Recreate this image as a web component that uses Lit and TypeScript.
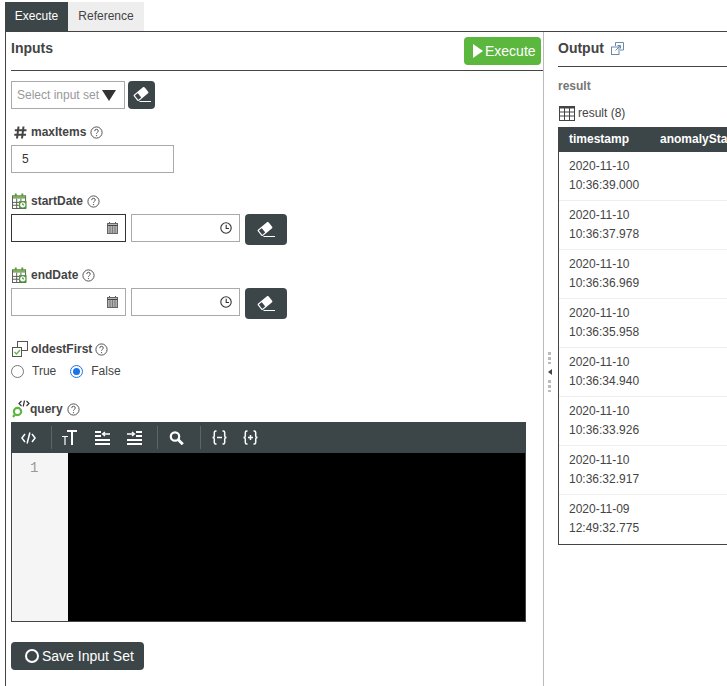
import { LitElement, html, css, svg } from "lit";
import { customElement } from "lit/decorators.js";

const eraser = svg`<svg width="18" height="16" viewBox="0 0 18 16"><g transform="rotate(-40 8 7)"><rect x="1" y="3" width="14" height="8" rx="1.500" fill="#fff"/><rect x="2.200" y="4.200" width="3.800" height="5.600" rx=".6" fill="#3c4648"/></g><path d="M6.500 14.500H18" stroke="#fff" stroke-width="1"/></svg>`;
const help = svg`<svg width="13" height="13" viewBox="0 0 13 13"><circle cx="6.500" cy="6.500" r="5.600" fill="none" stroke="#555" stroke-width="1"/><path d="M4.700 5.100a1.800 1.800 0 0 1 3.600 0c0 1.200-1.800 1.300-1.800 2.600" fill="none" stroke="#555" stroke-width="1"/><circle cx="6.500" cy="9.600" r=".7" fill="#555"/></svg>`;
const calGreen = svg`<svg width="15" height="16" viewBox="0 0 16 17"><rect x=".5" y="3" width="14" height="13.500" fill="#fff" stroke="#555"/><rect x="1" y="2.500" width="13" height="3.500" fill="#7fb05f"/><path d="M4 .5v3M11 .5v3" stroke="#5b9a3e" stroke-width="2"/><path d="M5 6v10M1 10h13M1 13h7M9.500 6v4" stroke="#555"/><rect x="7.500" y="8.500" width="8" height="8" fill="#4f9a3a"/><circle cx="11.500" cy="12.500" r="2.800" fill="#fff"/><path d="M11.500 11v1.700h1.300" stroke="#333" stroke-width=".8" fill="none"/></svg>`;
const calGrey = svg`<svg width="11" height="12" viewBox="0 0 11 12"><path d="M2.500 0v2M8.500 0v2" stroke="#555"/><rect x=".5" y="1.500" width="10" height="10" fill="#ddd" stroke="#666"/><path d="M.5 3.500h10" stroke="#444" stroke-width="1.500"/><path d="M3 4v7M5.500 4v7M8 4v7M1 6h9M1 8h9M1 10h9" stroke="#777" stroke-width=".9"/></svg>`;
const clock = svg`<svg width="12" height="12" viewBox="0 0 12 12"><circle cx="6" cy="6" r="5.200" fill="none" stroke="#333" stroke-width="1.100"/><path d="M6.200 2.800V6.500H9" stroke="#333" stroke-width="1.100" fill="none"/></svg>`;
const curlyL = "M4.500 1H3.800C2.800 1 2.300 1.500 2.300 2.500V6C2.300 7 1.500 7.500.5 7.500 1.500 7.500 2.300 8 2.300 9V12.500C2.300 13.500 2.800 14 3.800 14H4.500";
const curlyR = "M10.500 1H11.200C12.200 1 12.700 1.500 12.700 2.500V6C12.700 7 13.500 7.500 14.500 7.500 13.500 7.500 12.700 8 12.700 9V12.500C12.700 13.500 12.200 14 11.200 14H10.500";

@customElement("app-root")
export class AppRoot extends LitElement {
  static styles = css`
    :host { display: block; width: 727px; height: 686px; overflow: hidden; background: #fff; font-family: "Liberation Sans", Arial, sans-serif; font-size: 12px; color: #444; }
    svg { display: block; flex: none; }
    .tabs { display: flex; height: 29px; margin: 2px 0 0 5px; font-size: 12px; }
    .tab { display: flex; align-items: center; justify-content: center; box-sizing: border-box; height: 29px; padding-bottom: 2px; }
    .tab.on { width: 63px; background: #3c4648; color: #fff; }
    .tab.off { width: 76px; background: #eee; color: #444; }
    .main { display: flex; height: 655px; margin-left: 5px; border-top: 1px solid #444; }
    .left { box-sizing: border-box; width: 539px; height: 100%; flex: none; border-left: 1px solid #444; border-right: 1px solid #bbb; padding: 0 2px 0 5px; }
    .head { display: flex; justify-content: space-between; align-items: center; box-sizing: border-box; height: 39px; border-bottom: 1px solid #444; padding: 5px 0; margin-right: -2px; }
    h2 { margin: 0; font-size: 14px; font-weight: bold; color: #444; line-height: 16px; }
    .head h2 { margin-top: -6px; }
    .run { display: flex; align-items: center; box-sizing: border-box; width: 77px; height: 28px; margin-right: 2px; padding-left: 9px; gap: 2px; background: #5cb73f; border-radius: 4px; color: #fff; font-size: 14px; }
    .tri { width: 0; height: 0; border-left: 10px solid #fff; border-top: 7px solid transparent; border-bottom: 7px solid transparent; }
    .setrow { display: flex; gap: 3px; margin-top: 10px; }
    .select { display: flex; align-items: center; justify-content: space-between; box-sizing: border-box; width: 114px; height: 28px; border: 1px solid #aaa; padding: 0 8px 0 5px; color: #999; }
    .caret { width: 0; height: 0; border-top: 11px solid #333; border-left: 7px solid transparent; border-right: 7px solid transparent; }
    .clear { display: flex; align-items: center; justify-content: center; box-sizing: border-box; background: #3c4648; border-radius: 4px; }
    .clear.small { width: 27px; height: 28px; }
    .clear.big { width: 42px; height: 31px; }
    .label { display: flex; align-items: center; gap: 4px; height: 18px; font-weight: bold; color: #444; }
    .label.max { margin-top: 14px; padding-left: 3px; }
    .number { display: flex; align-items: center; box-sizing: border-box; width: 163px; height: 28px; margin-top: 4px; border: 1px solid #aaa; padding-left: 10px; color: #333; }
    .label.start { margin-top: 19px; padding-left: 1px; }
    .label.end { margin-top: 21px; padding-left: 1px; }
    .dates { display: flex; align-items: flex-start; gap: 5px; margin-top: 4px; }
    .input { display: flex; align-items: center; justify-content: flex-end; box-sizing: border-box; height: 28px; border: 1px solid #aaa; padding-right: 7px; }
    .input.date { width: 115px; }
    .input.time { width: 109px; }
    .input.focus { border-color: #333; }
    .label.oldest { margin-top: 21px; padding-left: 1px; gap: 3px; }
    .radios { display: flex; align-items: center; height: 14px; margin-top: 6px; color: #444; }
    .radio { box-sizing: border-box; width: 13px; height: 13px; border-radius: 50%; border: 1px solid #777; margin-right: 8px; background: #fff; }
    .radio.checked { border: 1px solid #1a73e8; padding: 2px; background: #1a73e8; background-clip: content-box; }
    .gap { width: 14px; }
    .label.query { margin-top: 22px; padding-left: 1px; gap: 0; }
    .label.query .qname { margin-right: 4px; }
    .editor { width: 515px; margin-top: 4px; box-sizing: border-box; }
    .bar { display: flex; align-items: center; height: 31px; background: #3c4648; }
    .sep { width: 1px; height: 23px; background: #59666a; }
    .sep.a { margin-left: 6px; }
    .sep.b { margin-left: 5px; }
    .tool { display: flex; justify-content: center; align-items: center; height: 31px; }
    .w27 { width: 27px; } .w31 { width: 31px; } .w33 { width: 33px; } .w34 { width: 34px; } .w35 { width: 35px; } .w36 { width: 36px; } .w37 { width: 37px; }
    .code { display: flex; height: 169px; border: 1px solid #444; border-top: 0; box-sizing: border-box; background: #000; }
    .gutter { box-sizing: border-box; width: 56px; background: #f5f5f5; color: #999; font-family: "Liberation Mono", monospace; font-size: 14px; padding: 7px 0 0 18px; }
    .save { display: flex; align-items: center; box-sizing: border-box; width: 133px; height: 28px; margin-top: 20px; padding-left: 14px; gap: 3px; background: #3c4648; border-radius: 4px; color: #fff; font-size: 14px; }
    .ring { box-sizing: border-box; width: 14px; height: 14px; border: 2.500px solid #fff; border-radius: 50%; }
    .right { position: relative; flex: 1; min-width: 0; overflow: hidden; padding-left: 14px; }
    .handle { position: absolute; left: 4px; top: 320px; display: flex; flex-direction: column; align-items: center; gap: 5px; width: 3px; }
    .dots { width: 3px; height: 12px; background-image: linear-gradient(#bbb 60%, transparent 60%); background-size: 3px 5px; }
    .arrow { width: 0; height: 0; border-right: 4px solid #444; border-top: 3px solid transparent; border-bottom: 3px solid transparent; }
    .ohead { display: flex; align-items: center; gap: 7px; box-sizing: border-box; height: 35px; border-bottom: 1px solid #444; padding-bottom: 2px; }
    .sub { margin-top: 11px; height: 16px; line-height: 16px; font-weight: bold; color: #777; }
    .cap { display: flex; align-items: center; margin-top: 10px; height: 18px; gap: 3px; padding-left: 1px; color: #444; }
    .table { width: 420px; margin-top: 5px; border-left: 1px solid #444; border-bottom: 1px solid #444; }
    .thead { display: flex; align-items: center; box-sizing: border-box; height: 25px; padding: 0 0 2px 10px; background: #3c4648; color: #fff; font-weight: bold; }
    .ts { width: 91px; }
    .row { box-sizing: border-box; height: 49px; padding: 5px 0 0 10px; border-bottom: 1px solid #eee; line-height: 19px; color: #444; }
    .row:last-child { border-bottom: 0; }
  `;

  render() {
    const rows = [
      ["2020-11-10", "10:36:39.000"], ["2020-11-10", "10:36:37.978"], ["2020-11-10", "10:36:36.969"],
      ["2020-11-10", "10:36:35.958"], ["2020-11-10", "10:36:34.940"], ["2020-11-10", "10:36:33.926"],
      ["2020-11-10", "10:36:32.917"], ["2020-11-09", "12:49:32.775"],
    ];
    return html`
      <div class="tabs"><div class="tab on">Execute</div><div class="tab off">Reference</div></div>
      <div class="main">
        <div class="left">
          <div class="head"><h2>Inputs</h2><div class="run"><span class="tri"></span>Execute</div></div>
          <div class="setrow">
            <div class="select">Select input set<span class="caret"></span></div>
            <div class="clear small">${eraser}</div>
          </div>
          <div class="label max">
            <svg width="13" height="13" viewBox="0 0 13 13"><path d="M4.500 .5 3 12.500M9.500 .5 8 12.500M.8 4.200h11.700M.3 8.800h11.700" fill="none" stroke="#444" stroke-width="2"/></svg>
            maxItems ${help}
          </div>
          <div class="number">5</div>
          <div class="label start">${calGreen}startDate ${help}</div>
          <div class="dates">
            <div class="input date focus">${calGrey}</div>
            <div class="input time">${clock}</div>
            <div class="clear big">${eraser}</div>
          </div>
          <div class="label end">${calGreen}endDate ${help}</div>
          <div class="dates">
            <div class="input date">${calGrey}</div>
            <div class="input time">${clock}</div>
            <div class="clear big">${eraser}</div>
          </div>
          <div class="label oldest">
            <svg width="16" height="16" viewBox="0 0 16 16"><rect x="5.500" y=".5" width="10" height="9" fill="#fff" stroke="#555"/><rect x=".5" y="6.500" width="9" height="9" fill="#fff" stroke="#555"/><path d="M2.500 11l2 2 3.500-4" stroke="#5cb73f" stroke-width="1.300" fill="none"/></svg>
            oldestFirst ${help}
          </div>
          <div class="radios">
            <span class="radio"></span>True<span class="gap"></span><span class="radio checked"></span>False
          </div>
          <div class="label query">
            <svg width="18" height="18" viewBox="0 0 18 18"><circle cx="5.500" cy="11.500" r="3.600" fill="none" stroke="#5cb73f" stroke-width="2.200"/><path d="M3 14.500 1 17" stroke="#5cb73f" stroke-width="2.200"/><path d="M9.500 1 7 3.500 9.500 6M12.500 .5 11.200 6.500M14.500 1 17 3.500 14.500 6" fill="none" stroke="#333" stroke-width="1.200"/></svg>
            <span class="qname">query</span>${help}
          </div>
          <div class="editor">
            <div class="bar">
              <div class="tool w34"><svg width="15" height="12" viewBox="0 0 15 12"><path d="M4 2 .9 6 4 10M11 2l3.100 4L11 10M8.900 .5 6.100 11.500" fill="none" stroke="#fff" stroke-width="1.500"/></svg></div>
              <div class="sep a"></div>
              <div class="tool w35"><svg width="15" height="15" viewBox="0 0 15 15"><path d="M5 1h10M10 1v14" fill="none" stroke="#fff" stroke-width="2"/><path d="M0 6.500h6M3 6.500V15" fill="none" stroke="#fff" stroke-width="1.200"/></svg></div>
              <div class="tool w31"><svg width="15" height="14" viewBox="0 0 15 14"><path d="M0 1h6M0 5h6M0 9h15M0 13h15" stroke="#fff" stroke-width="2"/><path d="M15 3H8M10 1 7.500 3 10 5" stroke="#fff" stroke-width="1.300" fill="none"/></svg></div>
              <div class="tool w33"><svg width="15" height="14" viewBox="0 0 15 14"><path d="M9 1h6M9 5h6M0 9h15M0 13h15" stroke="#fff" stroke-width="2"/><path d="M0 3h7M5 1l2.500 2L5 5" stroke="#fff" stroke-width="1.300" fill="none"/></svg></div>
              <div class="sep a"></div>
              <div class="tool w37"><svg width="15" height="14" viewBox="0 0 15 14"><circle cx="6" cy="5.500" r="4.200" fill="none" stroke="#fff" stroke-width="2.200"/><path d="M9 8.500l4.800 4.800" stroke="#fff" stroke-width="2.800"/></svg></div>
              <div class="sep b"></div>
              <div class="tool w36"><svg width="15" height="15" viewBox="0 0 15 15"><path d="${curlyL} ${curlyR} M5 7.500h5" fill="none" stroke="#fff" stroke-width="1.500"/></svg></div>
              <div class="tool w27"><svg width="15" height="15" viewBox="0 0 15 15"><path d="${curlyL} ${curlyR} M5 7.500h5M7.500 5v5" fill="none" stroke="#fff" stroke-width="1.500"/></svg></div>
            </div>
            <div class="code"><div class="gutter">1</div></div>
          </div>
          <div class="save"><span class="ring"></span>Save Input Set</div>
        </div>
        <div class="right">
          <div class="handle"><span class="dots"></span><span class="arrow"></span><span class="dots"></span></div>
          <div class="ohead"><h2>Output</h2>
            <svg width="13" height="13" viewBox="0 0 13 13"><path d="M4.500 4V.5h8v7.500H9" fill="none" stroke="#6d8aa8"/><rect x=".5" y="5" width="7.500" height="7.500" fill="none" stroke="#6d8aa8"/><path d="M4.500 8.500 9 4M6.500 3.500H9.500V6.500" fill="none" stroke="#6d8aa8"/></svg>
          </div>
          <div class="sub">result</div>
          <div class="cap">
            <svg width="16" height="15" viewBox="0 0 16 15"><rect x=".5" y=".5" width="15" height="14" fill="#fff" stroke="#444"/><path d="M0 1.500h16" stroke="#444" stroke-width="2"/><path d="M1 6h14M1 10h14M5.500 2v12M10.500 2v12" stroke="#444"/></svg>
            result (8)
          </div>
          <div class="table">
            <div class="thead"><span class="ts">timestamp</span><span>anomalyState</span></div>
            ${rows.map((r) => html`<div class="row">${r[0]}<br />${r[1]}</div>`)}
          </div>
        </div>
      </div>
    `;
  }
}
